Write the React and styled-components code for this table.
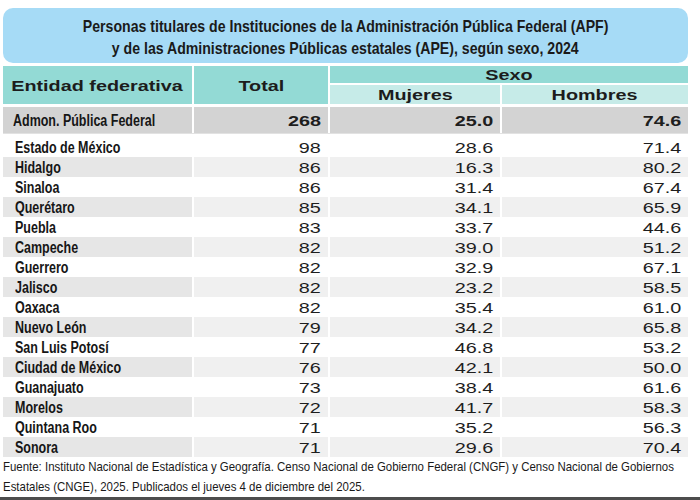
import React from "react"
import styled, { createGlobalStyle } from "styled-components"

const GlobalStyle = createGlobalStyle`
  html, body {
    margin: 0;
    padding: 0;
    background: #ffffff;
  }
  body {
    width: 700px;
    height: 500px;
    overflow: hidden;
    font-family: "Liberation Sans", Arial, sans-serif;
    color: #1c1c1c;
  }
`

const rows = [
  ["Estado de México", "98", "28.6", "71.4"],
  ["Hidalgo", "86", "16.3", "80.2"],
  ["Sinaloa", "86", "31.4", "67.4"],
  ["Querétaro", "85", "34.1", "65.9"],
  ["Puebla", "83", "33.7", "44.6"],
  ["Campeche", "82", "39.0", "51.2"],
  ["Guerrero", "82", "32.9", "67.1"],
  ["Jalisco", "82", "23.2", "58.5"],
  ["Oaxaca", "82", "35.4", "61.0"],
  ["Nuevo León", "79", "34.2", "65.8"],
  ["San Luis Potosí", "77", "46.8", "53.2"],
  ["Ciudad de México", "76", "42.1", "50.0"],
  ["Guanajuato", "73", "38.4", "61.6"],
  ["Morelos", "72", "41.7", "58.3"],
  ["Quintana Roo", "71", "35.2", "56.3"],
  ["Sonora", "71", "29.6", "70.4"],
]

const Page = styled.div`
  width: 700px;
  height: 500px;
  display: flex;
  flex-direction: column;
  padding: 8px 12px 0 3px;
  box-sizing: border-box;
  overflow: hidden;
`

// the source image is stretched sideways: wide text for the Arial parts,
// narrow text for the condensed parts
const Scale = styled.span`
  display: inline-block;
  transform: scaleX(${p => p.$x || 1.32});
  transform-origin: ${p => p.$origin || "center"} center;
  white-space: nowrap;
`

const TitleBox = styled.div`
  height: 55px;
  width: 685px;
  box-sizing: border-box;
  padding-top: 5px;
  border-radius: 10px;
  background: #a6dbf6;
  display: flex;
  flex-direction: column;
  align-items: center;
  justify-content: center;
  font-weight: bold;
  font-size: 17px;
  line-height: 22px;
  color: #1a1a1a;
`

const Table = styled.div`
  margin-top: 3px;
  width: 685px;
  display: grid;
  grid-template-columns: 189px 134px 170px 186px;
  column-gap: 2px;
`

const HeadCell = styled.div`
  grid-column: ${p => p.$col};
  grid-row: ${p => p.$row};
  height: ${p => p.$h || "auto"};
  background: ${p => (p.$light ? "#c6ebe8" : "#93dad5")};
  display: flex;
  align-items: center;
  justify-content: center;
  margin-top: ${p => (p.$gap ? "2px" : "0")};
  font-weight: bold;
  font-size: 15px;
`

const Row = styled.div`
  grid-column: 1 / -1;
  display: grid;
  grid-template-columns: subgrid;
  height: ${p => (p.$main ? "26px" : "20px")};
  margin-top: ${p => (p.$main ? "3px" : "0")};
  border-bottom: ${p => (p.$main ? "1px solid #e2e2e2" : "none")};
  margin-bottom: ${p => (p.$main ? "3px" : "0")};
`

const LabelCell = styled.div`
  display: flex;
  align-items: center;
  padding-top: 2px;
  padding-left: ${p => (p.$main ? "10px" : "12px")};
  background: ${p => (p.$main ? "#d3d3d3" : p.$band ? "#e6e6e6" : "transparent")};
  font-weight: bold;
  font-size: 16px;
  color: #161616;
  overflow: hidden;
`

const NumCell = styled.div`
  display: flex;
  align-items: center;
  justify-content: flex-end;
  padding-top: 1px;
  padding-right: 7px;
  background: ${p => (p.$main ? "#d3d3d3" : p.$band ? "#f0f0f0" : "transparent")};
  font-size: 15px;
  font-weight: ${p => (p.$main ? "bold" : "normal")};
  color: #1e1e1e;
`

const Footnote = styled.div`
  width: 685px;
  overflow: hidden;
  font-size: 13px;
  line-height: 20px;
  color: #1a1a1a;
  white-space: nowrap;
`

const BottomBar = styled.div`
  margin-top: auto;
  margin-left: -3px;
  margin-right: -12px;
  height: 3px;
  background: #4d4d4d;
`

const App = () => (
  <Page>
    <GlobalStyle />
    <TitleBox>
      <Scale $x={0.83}>Personas titulares de Instituciones de la Administración Pública Federal (APF)</Scale>
      <Scale $x={0.83}>y de las Administraciones Públicas estatales (APE), según sexo, 2024</Scale>
    </TitleBox>
    <Table>
      <HeadCell $col="1" $row="1 / 3">
        <Scale>Entidad federativa</Scale>
      </HeadCell>
      <HeadCell $col="2" $row="1 / 3">
        <Scale>Total</Scale>
      </HeadCell>
      <HeadCell $col="3 / 5" $row="1" $h="17px">
        <Scale>Sexo</Scale>
      </HeadCell>
      <HeadCell $col="3" $row="2" $h="19px" $light $gap>
        <Scale>Mujeres</Scale>
      </HeadCell>
      <HeadCell $col="4" $row="2" $h="19px" $light $gap>
        <Scale>Hombres</Scale>
      </HeadCell>

      <Row $main>
        <LabelCell $main>
          <Scale $x={0.78} $origin="left">Admon. Pública Federal</Scale>
        </LabelCell>
        <NumCell $main><Scale $origin="right">268</Scale></NumCell>
        <NumCell $main><Scale $origin="right">25.0</Scale></NumCell>
        <NumCell $main><Scale $origin="right">74.6</Scale></NumCell>
      </Row>

      {rows.map((r, i) => (
        <Row key={r[0]}>
          <LabelCell $band={i % 2 === 1}>
            <Scale $x={0.78} $origin="left">{r[0]}</Scale>
          </LabelCell>
          {r.slice(1).map((v, j) => (
            <NumCell key={j} $band={i % 2 === 1}>
              <Scale $origin="right">{v}</Scale>
            </NumCell>
          ))}
        </Row>
      ))}
    </Table>
    <Footnote>
      <Scale $x={0.88} $origin="left">
        Fuente: Instituto Nacional de Estadística y Geografía. Censo Nacional de Gobierno Federal (CNGF) y Censo Nacional de Gobiernos
      </Scale>
      <br />
      <Scale $x={0.88} $origin="left">
        Estatales (CNGE), 2025. Publicados el jueves 4 de diciembre del 2025.
      </Scale>
    </Footnote>
    <BottomBar />
  </Page>
)

export default App
